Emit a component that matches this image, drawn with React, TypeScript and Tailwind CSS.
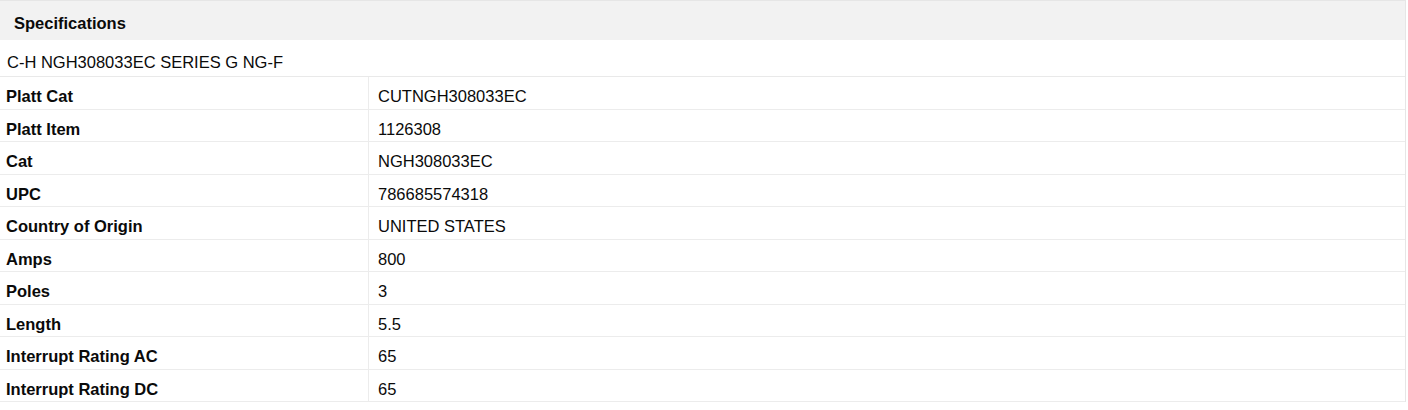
import React from "react";

const rows: [string, string][] = [
  ["Platt Cat", "CUTNGH308033EC"],
  ["Platt Item", "1126308"],
  ["Cat", "NGH308033EC"],
  ["UPC", "786685574318"],
  ["Country of Origin", "UNITED STATES"],
  ["Amps", "800"],
  ["Poles", "3"],
  ["Length", "5.5"],
  ["Interrupt Rating AC", "65"],
  ["Interrupt Rating DC", "65"],
];

export default function App() {
  return (
    <div className="w-[1408px] h-[410px] bg-white text-[#0a0a0a] font-['Liberation_Sans',Arial,sans-serif] text-[16.5px] leading-[19px]">
      <div className="w-[1406px] border-r border-t border-[#e6e6e6]">
        <div className="h-[39px] bg-[#f2f2f2] pl-[14px] pt-[13px] font-bold">
          Specifications
        </div>
        <div className="h-[37px] border-b border-[#e9e9e9] pl-[7px] pt-[13px]">
          C-H NGH308033EC SERIES G NG-F
        </div>
        {rows.map(([k, v]) => (
          <div key={k} className="flex h-[32.5px] border-b border-[#ececec]">
            <div className="w-[369px] border-r border-[#ececec] pl-[6px] pt-[10px] font-bold">{k}</div>
            <div className="flex-1 pl-[9px] pt-[10px]">{v}</div>
          </div>
        ))}
      </div>
    </div>
  );
}
